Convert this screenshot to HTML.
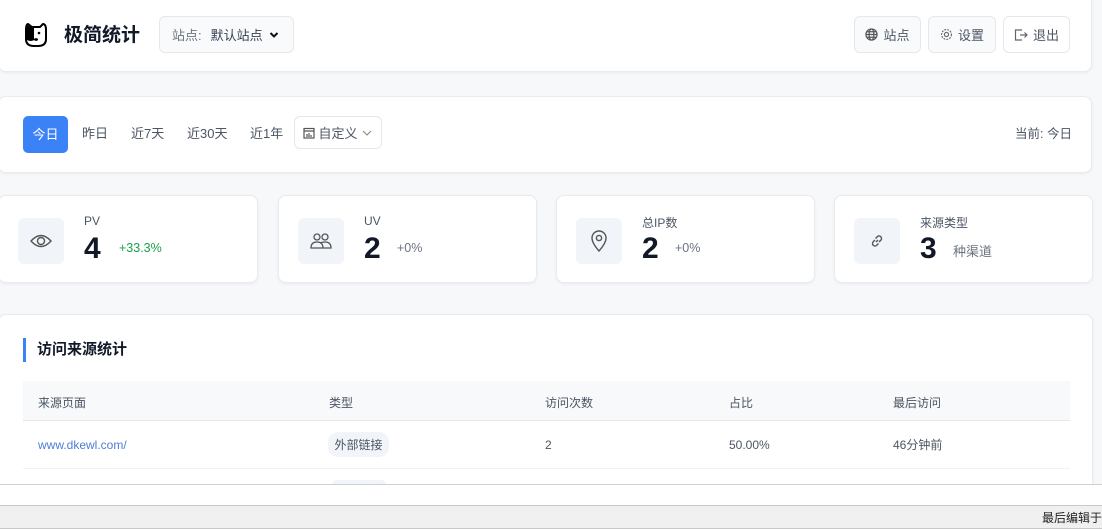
<!DOCTYPE html>
<html><head><meta charset="utf-8"><style>
*{box-sizing:border-box;margin:0;padding:0}
body{width:1102px;height:529px;overflow:hidden;background:#f6f8fa;font-family:"Liberation Sans","Noto Sans CJK SC",sans-serif;color:#374151;position:relative}
.card{position:absolute;background:#fff;border:1px solid #e8ecf0;border-radius:8px;box-shadow:0 1px 3px rgba(0,0,0,.06)}
.a{position:absolute;white-space:nowrap;line-height:16px}
.btn{position:absolute;height:37px;border:1px solid #e5e7eb;border-radius:6px;background:#f8fafc;font-size:13px;color:#4b5563;display:flex;align-items:center;justify-content:center;gap:5px}
.ib{position:absolute;left:19px;top:22px;width:46px;height:46px;background:#f1f4f8;border-radius:6px;display:flex;align-items:center;justify-content:center}
.lab{position:absolute;left:85px;top:18px;font-size:12px;color:#4b5563}
.num{position:absolute;left:85px;top:36px;font-size:30px;font-weight:bold;color:#111827}
.sub{position:absolute;left:118px;top:45px;font-size:12.5px;color:#6b7280}
.th{position:absolute;top:395px;font-size:12px;color:#4b5563;line-height:16px}
.td{position:absolute;top:437px;font-size:12px;color:#4b5563;line-height:16px}
</style></head><body>
<div class="card" style="left:-2px;top:-10px;width:1094px;height:82px"></div>
<svg class="a" style="left:24px;top:21px" width="24" height="27" viewBox="0 0 24 27"><path d="M4 3 Q2 3 2 9 L2 18 Q2 25 10 25 L14 25 Q22 25 22 18 L22 9 Q22 3 19 3 L16 6 L8 6 Z" fill="#fff" stroke="#000" stroke-width="2"/><path d="M3 4 L8 6 L10 6 L10 19 Q7 21 3 19 Z" fill="#000"/><circle cx="15" cy="12" r="1.3" fill="#000"/><ellipse cx="12" cy="18.5" rx="2" ry="1.4" fill="#000"/></svg>
<div class="a" style="left:64px;top:25px;font-size:19px;font-weight:bold;color:#111827;line-height:22px">极简统计</div>
<div class="btn" style="left:159px;top:16px;width:135px;gap:0;justify-content:flex-start;padding-left:12px"><span style="color:#6b7280">站点:</span><span style="margin-left:9px;color:#374151">默认站点</span><svg style="margin-left:6px" width="10" height="8" viewBox="0 0 10 8"><path d="M1.5 2 L5 5.5 L8.5 2" fill="none" stroke="#111" stroke-width="2"/></svg></div>
<div class="btn" style="left:854px;top:16px;width:67px"><svg width="13" height="13" viewBox="0 0 14 14" fill="none" stroke="#555" stroke-width="1.3"><circle cx="7" cy="7" r="6"/><ellipse cx="7" cy="7" rx="2.6" ry="6"/><path d="M1 7h12M2 4h10M2 10h10"/></svg>站点</div>
<div class="btn" style="left:928px;top:16px;width:68px"><svg width="13" height="13" viewBox="0 0 14 14" fill="none" stroke="#666" stroke-width="1.2"><circle cx="7" cy="7" r="2.2"/><circle cx="7" cy="7" r="5.3" stroke-dasharray="2 1.2"/></svg>设置</div>
<div class="btn" style="left:1003px;top:16px;width:67px;background:#fff"><svg width="14" height="12" viewBox="0 0 14 12" fill="none" stroke="#666" stroke-width="1.2"><path d="M8 1H1.5v10H8M6 6h7M10.5 3.5 13 6l-2.5 2.5"/></svg>退出</div>

<div class="card" style="left:-2px;top:96px;width:1094px;height:77px"></div>
<div class="a" style="left:23px;top:116px;width:45px;height:37px;background:#3b82f6;border-radius:5px;color:#fff;font-size:13px;display:flex;align-items:center;justify-content:center">今日</div>
<div class="a" style="left:82px;top:126px;font-size:13px;color:#4b5563">昨日</div>
<div class="a" style="left:131px;top:126px;font-size:13px;color:#4b5563">近7天</div>
<div class="a" style="left:187px;top:126px;font-size:13px;color:#4b5563">近30天</div>
<div class="a" style="left:250px;top:126px;font-size:13px;color:#4b5563">近1年</div>
<div class="btn" style="left:294px;top:116px;width:88px;height:33px;background:#fff;gap:3px"><svg width="12" height="12" viewBox="0 0 12 12" fill="none" stroke="#555" stroke-width="1.2"><rect x="1" y="1.5" width="10" height="9.5"/><path d="M1 4h10M4 7v3M6 6v4M8 8v2"/></svg>自定义<svg width="12" height="8" viewBox="0 0 12 8"><path d="M2 2l4 4 4-4" fill="none" stroke="#888" stroke-width="1.1"/></svg></div>
<div class="a" style="left:1015px;top:126px;font-size:12.5px;color:#4b5563">当前: 今日</div>

<div class="card" style="left:-2px;top:195px;width:260px;height:88px"><div class="ib"><svg width="22" height="16" viewBox="0 0 22 16" fill="none" stroke="#555" stroke-width="1.4"><path d="M1 8Q11-3 21 8Q11 19 1 8Z"/><circle cx="11" cy="8" r="3.5"/></svg></div><div class="lab">PV</div><div class="num">4</div><div class="sub" style="color:#16a34a;left:120px">+33.3%</div></div>
<div class="card" style="left:278px;top:195px;width:259px;height:88px"><div class="ib"><svg width="22" height="18" viewBox="0 0 22 18" fill="none" stroke="#555" stroke-width="1.3"><circle cx="7" cy="5" r="3"/><circle cx="15" cy="5" r="3"/><path d="M1 16q0-6 6-6t6 6zM10 11q2-1 5-1 6 0 6 6h-8"/></svg></div><div class="lab">UV</div><div class="num">2</div><div class="sub" style="left:118px">+0%</div></div>
<div class="card" style="left:556px;top:195px;width:259px;height:88px"><div class="ib"><svg width="16" height="22" viewBox="0 0 16 22" fill="none" stroke="#555" stroke-width="1.4"><path d="M8 21Q1 13 1 8a7 7 0 0 1 14 0q0 5-7 13z"/><circle cx="8" cy="8" r="2.6"/></svg></div><div class="lab">总IP数</div><div class="num">2</div><div class="sub" style="left:118px">+0%</div></div>
<div class="card" style="left:834px;top:195px;width:259px;height:88px"><div class="ib"><svg width="16" height="16" viewBox="0 0 16 16" fill="none" stroke="#555" stroke-width="1.4"><path d="M7 9l2-2M6 7L4 9a2.5 2.5 0 0 0 3.5 3.5L9.5 10.5M10 9l2-2A2.5 2.5 0 0 0 8.5 3.5L6.5 5.5"/></svg></div><div class="lab">来源类型</div><div class="num">3</div><div class="sub" style="left:118px;font-size:13px">种渠道</div></div>

<div class="card" style="left:-2px;top:314px;width:1095px;height:200px"></div>
<div class="a" style="left:23px;top:338px;width:3px;height:24px;background:#3b82f6"></div>
<div class="a" style="left:37px;top:341px;font-size:15px;font-weight:bold;color:#111827;line-height:18px">访问来源统计</div>
<div class="a" style="left:23px;top:381px;width:1047px;height:40px;background:#f7f9fb;border-bottom:1px solid #e5e7eb"></div>
<div class="th" style="left:38px">来源页面</div><div class="th" style="left:329px">类型</div><div class="th" style="left:545px">访问次数</div><div class="th" style="left:729px">占比</div><div class="th" style="left:893px">最后访问</div>
<div class="td" style="left:38px;color:#4f7dd6">www.dkewl.com/</div>
<div class="a" style="left:328px;top:432px;width:61px;height:25px;background:#f1f4f8;border-radius:10px;font-size:12px;color:#4b5563;display:flex;align-items:center;justify-content:center">外部链接</div>
<div class="td" style="left:545px">2</div><div class="td" style="left:729px">50.00%</div><div class="td" style="left:893px">46分钟前</div>
<div class="a" style="left:23px;top:468px;width:1047px;height:1px;background:#f0f2f5"></div>
<div class="a" style="left:332px;top:480px;width:54px;height:10px;background:#f1f4f8;border-radius:8px"></div>
<div class="a" style="left:0;top:484px;width:1102px;height:21px;background:#fff;border-top:1px solid #d0d0d0"></div>
<div class="a" style="left:0;top:505px;width:1102px;height:24px;background:#f0f0f0;border-top:1px solid #c8c8c8;border-bottom:1px solid #c8c8c8"></div>
<div class="a" style="left:1042px;top:510px;font-size:12px;color:#222">最后编辑于</div>
</body></html>
